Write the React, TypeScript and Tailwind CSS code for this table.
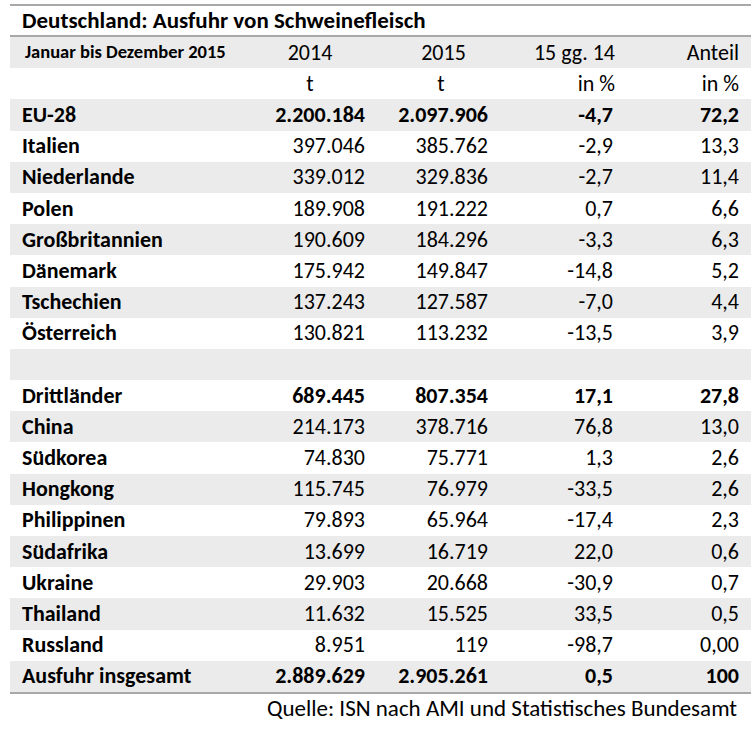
import React from "react";

type Row = {
  label: string;
  a: string;
  b: string;
  c: string;
  d: string;
  bold?: boolean;
};

const rows: Row[] = [
  { label: "EU-28", a: "2.200.184", b: "2.097.906", c: "-4,7", d: "72,2", bold: true },
  { label: "Italien", a: "397.046", b: "385.762", c: "-2,9", d: "13,3" },
  { label: "Niederlande", a: "339.012", b: "329.836", c: "-2,7", d: "11,4" },
  { label: "Polen", a: "189.908", b: "191.222", c: "0,7", d: "6,6" },
  { label: "Großbritannien", a: "190.609", b: "184.296", c: "-3,3", d: "6,3" },
  { label: "Dänemark", a: "175.942", b: "149.847", c: "-14,8", d: "5,2" },
  { label: "Tschechien", a: "137.243", b: "127.587", c: "-7,0", d: "4,4" },
  { label: "Österreich", a: "130.821", b: "113.232", c: "-13,5", d: "3,9" },
  { label: "", a: "", b: "", c: "", d: "" },
  { label: "Drittländer", a: "689.445", b: "807.354", c: "17,1", d: "27,8", bold: true },
  { label: "China", a: "214.173", b: "378.716", c: "76,8", d: "13,0" },
  { label: "Südkorea", a: "74.830", b: "75.771", c: "1,3", d: "2,6" },
  { label: "Hongkong", a: "115.745", b: "76.979", c: "-33,5", d: "2,6" },
  { label: "Philippinen", a: "79.893", b: "65.964", c: "-17,4", d: "2,3" },
  { label: "Südafrika", a: "13.699", b: "16.719", c: "22,0", d: "0,6" },
  { label: "Ukraine", a: "29.903", b: "20.668", c: "-30,9", d: "0,7" },
  { label: "Thailand", a: "11.632", b: "15.525", c: "33,5", d: "0,5" },
  { label: "Russland", a: "8.951", b: "119", c: "-98,7", d: "0,00" },
  { label: "Ausfuhr insgesamt", a: "2.889.629", b: "2.905.261", c: "0,5", d: "100", bold: true },
];

const grid = "grid grid-cols-[245px_122px_123px_125px_126px] h-[31.2px] items-center";

export default function App() {
  return (
    <div
      className="w-[753px] h-[737px] bg-white text-black pl-[10px] pt-[4px]"
      style={{ fontFamily: "Carlito, Calibri, Lato, 'Liberation Sans', sans-serif" }}
    >
      <div className="w-[741px]">
        <div className="h-[2px] bg-[#a8a8a8]" />
        <div className="h-[29px] flex items-center pl-[12px] text-[23px] font-bold leading-none">
          Deutschland: Ausfuhr von Schweinefleisch
        </div>
        <div className="h-[2px] bg-[#a8a8a8]" />
        {/* header */}
        <div className={`${grid} bg-[#ebebeb] text-[22px] leading-none`}>
          <div className="pl-[15px] text-[18.5px] font-bold">Januar bis Dezember 2015</div>
          <div className="text-center pr-[12px]">2014</div>
          <div className="text-center pl-[10px]">2015</div>
          <div className="text-right pr-[10px]">15 gg. 14</div>
          <div className="text-right pr-[12px]">Anteil</div>
        </div>
        <div className={`${grid} text-[22px] leading-none`}>
          <div />
          <div className="text-center pr-[12px]">t</div>
          <div className="text-center pl-[5px]">t</div>
          <div className="text-right pr-[10px]">in %</div>
          <div className="text-right pr-[12px]">in %</div>
        </div>
        {rows.map((r, i) => (
          <div
            key={i}
            className={`${grid} text-[22px] leading-none ${i % 2 === 0 ? "bg-[#ebebeb]" : "bg-white"}`}
          >
            <div className="pl-[12px] font-bold">{r.label}</div>
            <div className={`text-right pr-[12px] ${r.bold ? "font-bold" : ""}`}>{r.a}</div>
            <div className={`text-right pr-[12px] ${r.bold ? "font-bold" : ""}`}>{r.b}</div>
            <div className={`text-right pr-[12px] ${r.bold ? "font-bold" : ""}`}>{r.c}</div>
            <div className={`text-right pr-[12px] ${r.bold ? "font-bold" : ""}`}>{r.d}</div>
          </div>
        ))}
        <div className="h-[2px] bg-[#a8a8a8]" />
        <div className="flex justify-end pr-[14px] pt-[1px] text-[23px] leading-[26px]">
          Quelle: ISN nach AMI und Statistisches Bundesamt
        </div>
      </div>
    </div>
  );
}
